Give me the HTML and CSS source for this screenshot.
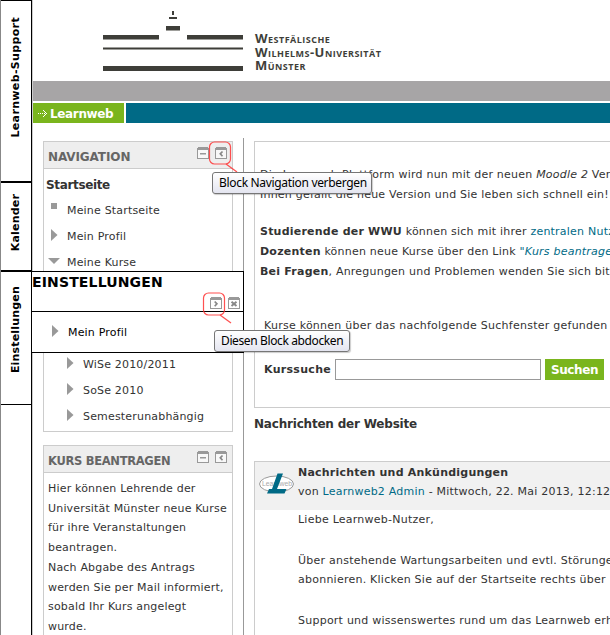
FILE: index.html
```html
<!DOCTYPE html>
<html lang="de">
<head>
<meta charset="utf-8">
<title>Learnweb</title>
<link rel="stylesheet" href="styles.css">
</head>
<body>
<svg class="defs" width="0" height="0">
  <symbol id="win" viewBox="0 0 12 12"><path d="M1 1h10v10H1z" fill="#fff" fill-opacity=".6"/><path d="M1 0h10v1h1v11H0V1h1zM1 3v8h10V3z" fill="#999" fill-rule="evenodd"/></symbol>
  <symbol id="minus" viewBox="0 0 12 12"><use href="#win"/><path d="M3 6h6v1.500H3z" fill="#999"/></symbol>
  <symbol id="left" viewBox="0 0 12 12"><use href="#win"/><path d="M7.500 4.500L5.300 6.800l2.200 2.400" fill="none" stroke="#888" stroke-width="1.700"/></symbol>
  <symbol id="right" viewBox="0 0 12 12"><use href="#win"/><path d="M4.700 4.500l2.200 2.300-2.200 2.400" fill="none" stroke="#888" stroke-width="1.700"/></symbol>
  <symbol id="close" viewBox="0 0 12 12"><use href="#win"/><path d="M3.500 4.700l5 4.300M8.500 4.700l-5 4.300" fill="none" stroke="#888" stroke-width="1.900"/></symbol>
</svg>
<div class="page">
  <aside class="dock">
    <div class="tab support"><span>Learnweb-Support</span></div>
    <div class="tab kalender"><span>Kalender</span></div>
    <div class="tab einst"><span>Einstellungen</span></div>
  </aside>
  <div class="site">
    <header class="head">
      <svg class="bars" width="140" height="62" viewBox="0 0 140 62">
        <g fill="#3e3e39"><path d="M69 0h2v4h-2zM66 6h8v2h-8zM63 15h14v4.500H63zM0 24h56v4.500H0zM84 24h56v4.500H84zM0 36.500h140v2H0zM0 55h140v5H0z"/></g>
      </svg>
      <div class="uni"><div>Westfälische</div><div>Wilhelms-Universität</div><div>Münster</div></div>
    </header>
    <div class="greybar"></div>
    <nav class="menu">
      <a class="home"><svg width="9" height="9" viewBox="0 0 9 9" fill="#fff"><path d="M0 4h1v1H0zM2 4h1v1H2zM4 4h1v1H4zM6 4h1v1H6zM8 4h1v1H8zM7 3h1v1H7zM6 2h1v1H6zM5 1h1v1H5zM7 5h1v1H7zM6 6h1v1H6zM5 7h1v1H5z"/></svg><b>Learnweb</b></a>
      <div class="fill"></div>
    </nav>
    <div class="columns">
      <div class="side">
        <section class="block nav">
          <h2><span class="t-nav">Navigation</span><i><svg><use href="#minus"/></svg><svg><use href="#left"/></svg></i></h2>
          <div class="start">Startseite</div>
          <ul>
            <li><svg class="mk"><path d="M3 0h6v6H3z"/></svg><span>Meine Startseite</span></li>
            <li><svg class="mk"><path d="M3 0l6.500 6L3 12z"/></svg><span>Mein Profil</span></li>
            <li><svg class="mk"><path d="M0 3h12L6 9z"/></svg><span>Meine Kurse</span></li>
          </ul>
          <ul class="sub">
            <li><svg class="mk"><path d="M3 0l6.500 6L3 12z"/></svg><span>WiSe 2010/2011</span></li>
            <li><svg class="mk"><path d="M3 0l6.500 6L3 12z"/></svg><span>SoSe 2010</span></li>
            <li><svg class="mk"><path d="M3 0l6.500 6L3 12z"/></svg><span>Semesterunabhängig</span></li>
          </ul>
        </section>
        <section class="block course">
          <h2><span class="t-kurs">Kurs beantragen</span><i><svg><use href="#minus"/></svg><svg><use href="#left"/></svg></i></h2>
          <p>Hier können Lehrende der<br>Universität Münster neue Kurse<br>für ihre Veranstaltungen<br>beantragen.<br>Nach Abgabe des Antrags<br>werden Sie per Mail informiert,<br>sobald Ihr Kurs angelegt<br>wurde.</p>
        </section>
      </div>
      <main class="main">
        <section class="box intro">
          <p>Die Learnweb-Plattform wird nun mit der neuen <em>Moodle 2</em> Ver<br>Ihnen gefällt die neue Version und Sie leben sich schnell ein!</p>
          <p><b>Studierende der WWU</b> können sich mit ihrer <a>zentralen Nutz</a><br><b>Dozenten</b> können neue Kurse über den Link <a><em>"Kurs beantrage</em></a><br><b>Bei Fragen</b>, Anregungen und Problemen wenden Sie sich bit</p>
          <p class="hint">Kurse können über das nachfolgende Suchfenster gefunden</p>
          <form class="search"><b>Kurssuche</b><input type="text"><button type="button">Suchen</button></form>
        </section>
        <h3>Nachrichten der Website</h3>
        <section class="box news">
          <div class="newshead">
            <svg class="logo" width="36" height="24" viewBox="0 0 36 24"><ellipse cx="17.500" cy="12" rx="17" ry="8" fill="#fff" stroke="#999"/><text class="logotext" x="3" y="14" textLength="30" lengthAdjust="spacingAndGlyphs">Learnweb</text><path d="M18.500 1.500H24L18 17h9.500l-2 4.500H8L10 17h3z" fill="#006a86"/></svg>
            <div><b>Nachrichten und Ankündigungen</b><br>von <a>Learnweb2 Admin</a> - Mittwoch, 22. Mai 2013, 12:12</div>
          </div>
          <div class="newsbody">
            <p>Liebe Learnweb-Nutzer,</p>
            <p>Über anstehende Wartungsarbeiten und evtl. Störunge<br>abonnieren. Klicken Sie auf der Startseite rechts über</p>
            <p>Support und wissenswertes rund um das Learnweb erh</p>
          </div>
        </section>
      </main>
    </div>
  </div>
  <div class="flyout">
    <div class="flyhead"><b>EINSTELLUNGEN</b><i><svg><use href="#right"/></svg><svg><use href="#close"/></svg></i></div>
    <div class="flybody"><svg class="mk"><path d="M3 0l6.500 6L3 12z"/></svg><span>Mein Profil</span></div>
  </div>
  <svg class="mark m1" width="34" height="36"><rect x="1.500" y="1" width="21" height="22" rx="5"/><path d="M18 23l11 8"/></svg>
  <svg class="mark m2" width="34" height="36"><rect x="1.500" y="1" width="21" height="22" rx="5"/><path d="M18 23l11 8"/></svg>
  <div class="tip tip1"><span>Block Navigation verbergen</span></div>
  <div class="tip tip2"><span>Diesen Block abdocken</span></div>
</div>
</body>
</html>
```
FILE: styles.css
```css
* { box-sizing: border-box; }
body { margin: 0; background: #fff; color: #333; font: 11px/19.7px "DejaVu Sans", Verdana, sans-serif; letter-spacing: .18px; }
p, h2, h3, ul { margin: 0; padding: 0; }
ul { list-style: none; }
a { color: #006a86; text-decoration: none; }
.defs { position: absolute; }
.page { position: relative; width: 610px; height: 635px; overflow: hidden; display: flex; white-space: nowrap; }
.dock { flex: none; width: 32px; border-left: 1px solid #888; border-right: 1px solid #000; }
.tab { display: flex; justify-content: center; align-items: flex-start; border-top: 1px solid #000; border-bottom: 1px solid #000; color: #000; font-weight: bold; line-height: 28px; }
.tab span { writing-mode: vertical-rl; transform: rotate(180deg); }
.support { height: 182px; padding-top: 16px; letter-spacing: .35px; }
.kalender { height: 89px; padding-top: 11px; }
.einst { height: 134px; padding-top: 14px; }
.site { flex: 1; min-width: 0; border-left: 1px solid #ccc; overflow: hidden; }
.head { height: 81px; display: flex; padding: 11px 0 0 70px; }
.bars { flex: none; }
.uni { margin: 21px 0 0 12px; color: #3e3e39; font: 700 13px/13.7px "Open Sans", sans-serif; font-variant-caps: small-caps; letter-spacing: .48px; }
.greybar { height: 20px; background: #a7a5a6; }
.menu { display: flex; gap: 2px; height: 20px; margin-top: 2px; }
.home { width: 91px; background: #7ab51d; color: #fff; display: flex; align-items: center; padding-left: 5px; gap: 3px; font-size: 12px; letter-spacing: -.35px; }
.home b { padding-top: 3px; }
.fill { flex: 1; background: #006a86; }
.columns { display: flex; margin-top: 15px; height: 497px; }
.side { flex: none; width: 211px; padding: 3px 10px 0; border-right: 1px solid #999; }
.block, .box { border: 1px solid #ccc; }
.nav { height: 291px; }
.block h2 { height: 27px; background: #eee; border-bottom: 1px solid #ccc; color: #666; font-size: 12px; text-transform: uppercase; display: flex; justify-content: space-between; padding: 5px 5px 0 4px; line-height: 20px; }
.t-nav { letter-spacing: -.1px; }
.t-kurs { font-size: 11.500px; letter-spacing: -.3px; }
i { display: flex; gap: 6px; }
i svg { width: 12px; height: 12px; }
.start { padding: 7px 0 0 2px; font-weight: bold; font-size: 12px; height: 32px; letter-spacing: -.35px; }
li, .flybody { display: flex; gap: 7px; padding-left: 4px; height: 26px; }
.mk { width: 12px; height: 12px; fill: #999; flex: none; margin-top: 2px; }
.sub { padding: 76px 0 0 16px; }
.course { margin-top: 13px; height: 220px; }
.course p { padding: 6px 0 0 4px; }
.main { flex: none; width: 420px; padding: 3px 0 0 10px; }
.intro { height: 267px; padding: 23px 0 0 5px; }
.intro p { letter-spacing: .22px; }
.intro p + p { margin-top: 18px; }
.intro .hint { margin-top: 34px; padding-left: 4px; letter-spacing: .25px; }
.search { display: flex; margin: 24px 0 0 4px; line-height: 22px; }
.search b { width: 71px; letter-spacing: .3px; }
.search input { width: 206px; height: 21px; border: 1px solid #999; padding: 0; }
.search button { width: 59px; height: 21px; margin-left: 4px; border: 0; padding: 0; background: #7ab51d; color: #fff; font: bold 12px "DejaVu Sans", sans-serif; letter-spacing: -.4px; }
h3 { font-size: 12px; line-height: 20px; margin-top: 6px; height: 47px; letter-spacing: -.2px; }
.news { height: 200px; }
.newshead { height: 48px; background: #f1f1f1; display: flex; padding-left: 4px; gap: 3px; line-height: 19px; letter-spacing: .22px; }
.newshead > div { padding-top: 1px; }
.logo { margin-top: 10px; flex: none; }
.logotext { font: 7px "Liberation Sans", sans-serif; fill: #aaa; letter-spacing: 0; }
.newsbody { padding: 0 0 0 43px; letter-spacing: .24px; }
.newsbody p + p { margin-top: 21px; }
.flyout { position: absolute; left: 31px; top: 271px; width: 213px; height: 82px; background: #fff; border: 1px solid #000; color: #000; }
.flyhead { height: 40px; border-bottom: 1px solid #000; position: relative; font-size: 14px; line-height: 20px; letter-spacing: .15px; }
.flyhead i { position: absolute; right: 3px; top: 25px; }
.flybody { padding: 11px 0 0 17px; }
.mark { position: absolute; fill: none; stroke: #f33; stroke-width: 1.200; opacity: .85; }
.m1 { left: 208px; top: 141px; }
.m2 { left: 202px; top: 292px; }
.tip { position: absolute; height: 22px; border: 1px solid #767676; border-radius: 3px; background: linear-gradient(#fff, #e4e5f0); color: #000; font: 12px/20px "Noto Sans", sans-serif; padding-left: 6px; box-shadow: 1px 1px 1px #0003; }
.tip1 { left: 212px; top: 172px; width: 160px; letter-spacing: -.32px; }
.tip2 { left: 214px; top: 330px; width: 136px; letter-spacing: -.38px; }
```
